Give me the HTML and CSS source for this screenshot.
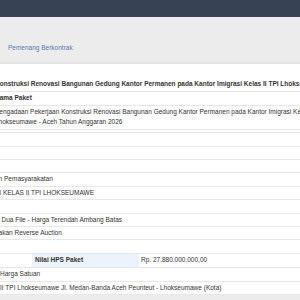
FILE: index.html
```html
<!DOCTYPE html>
<html lang="id">
<head>
    <meta charset="UTF-8">
    <meta name="viewport" content="width=device-width, initial-scale=1.0">
    <title>Informasi Tender</title>
    <link rel="stylesheet" href="styles.css">
</head>
<body>

<div class="topbar"></div>

<!-- tab navigasi -->
<div class="tabs">
    <span class="tab">Pemenang Berkontrak</span>
</div>

<!-- panel informasi paket -->
<div class="panel">
    <div class="panel-title">Konstruksi Renovasi Bangunan Gedung Kantor Permanen pada Kantor Imigrasi Kelas II TPI Lhokseumawe</div>
    <div class="row label">Nama Paket</div>
    <div class="row">Pengadaan Pekerjaan Konstruksi Renovasi Bangunan Gedung Kantor Permanen pada Kantor Imigrasi Kelas II TPI<br>Lhokseumawe - Aceh Tahun Anggaran 2026</div>
    <div class="gap"></div>
    <div class="row"></div>
    <div class="row"></div>
    <div class="row"></div>
    <div class="row">an Pemasyarakatan</div>
    <div class="row">SI KELAS II TPI LHOKSEUMAWE</div>
    <div class="row"></div>
    <div class="row">si Dua File - Harga Terendah Ambang Batas</div>
    <div class="row">nakan Reverse Auction</div>
    <div class="row"></div>
    <div class="row split">
        <div class="cell-empty"></div>
        <div class="cell-head">Nilai HPS Paket</div>
        <div class="cell-value">Rp. 27.880.000.000,00</div>
    </div>
    <div class="row">k Harga Satuan</div>
    <div class="row">s II TPI Lhokseumawe Jl. Medan-Banda Aceh Peunteut - Lhokseumawe (Kota)</div>
</div>

</body>
</html>
```

FILE: styles.css
```css
body {
    margin: 0;
    overflow: hidden;
    background-color: #ececec;
    font-family: "Liberation Sans", Arial, sans-serif;
    font-size: 6.5px;
    color: #333;
}
.topbar {
    height: 17px;
    background-color: #374254;
}
.tabs {
    height: 46px;
    display: flex;
    align-items: flex-end;
}
.tab {
    padding: 10px 8px;
    line-height: 10.4px;
    color: #5b78ad;
}
.panel {
    margin-left: -5px;
    width: 420px;
    background-color: #fff;
    border-top: 1px solid #e2e2e2;
    box-shadow: 0 1px 3px rgba(0, 0, 0, 0.18);
    white-space: nowrap;
}
.panel-title {
    padding: 15px 0 2px;
    line-height: 10.4px;
    font-weight: bold;
    border-bottom: 1px solid #e6e6e6;
}
.row {
    min-height: 10.4px;
    padding: 1px 0;
    line-height: 10.4px;
    border-bottom: 1px solid #e8e8e8;
}
.row.label {
    font-weight: bold;
}
.gap {
    height: 2.6px;
    border-bottom: 1px solid #e8e8e8;
}
.split {
    display: flex;
    padding: 0;
}
.cell-empty {
    width: 37px;
}
.cell-head {
    width: 104px;
    padding: 1.5px 0 1.5px 3px;
    background-color: #edf3fa;
    font-weight: bold;
}
.cell-value {
    padding: 1.5px 0 1.5px 2px;
}
```
